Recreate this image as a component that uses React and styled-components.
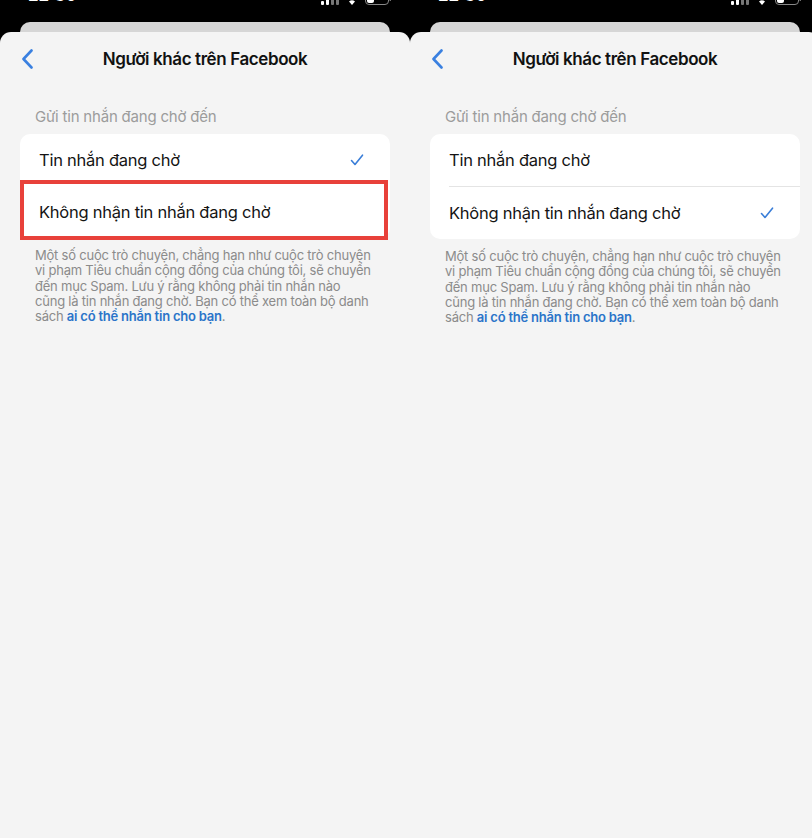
import styled, { createGlobalStyle } from "styled-components";

const GlobalStyle = createGlobalStyle`
  html, body {
    margin: 0;
    padding: 0;
    background: #000;
  }
  body {
    font-family: Inter, "Noto Sans", sans-serif;
    -webkit-font-smoothing: antialiased;
  }
`;

const Root = styled.div`
  width: 812px;
  height: 838px;
  overflow: hidden;
  display: grid;
  grid-template-columns: 410px 410px;
  background: #000;
`;

const Phone = styled.div`
  display: flex;
  flex-direction: column;
  height: 838px;
  background: #000;
`;

// only the lower edge of the status bar is visible above the sheet
const StatusBar = styled.div`
  height: 22px;
  overflow: hidden;
`;

const StatusInner = styled.div`
  display: flex;
  justify-content: space-between;
  align-items: flex-end;
  margin-top: -13px;
  padding: 0 18px 0 28px;
  color: #fff;
  font-size: 17px;
  font-weight: 600;
  height: 18px;
`;

const StatusIcons = styled.div`
  display: flex;
  align-items: flex-end;
  gap: 6px;
`;

const BehindSheet = styled.div`
  height: 10px;
  margin: 0 20px;
  background: #d6d6d6;
  border-radius: 10px 10px 0 0;
`;

const Sheet = styled.div`
  flex: 1;
  background: #f4f4f4;
  border-radius: 11px 11px 0 0;
  display: flex;
  flex-direction: column;
`;

const NavBar = styled.div`
  height: 54px;
  display: grid;
  grid-template-columns: 60px 1fr 60px;
  align-items: center;
`;

const BackButton = styled.div`
  padding-left: 21px;
  display: flex;
  align-items: center;
`;

const Title = styled.div`
  text-align: center;
  font-size: 17px;
  font-weight: 600;
  color: #111;
  letter-spacing: -0.4px;
`;

const SectionLabel = styled.div`
  margin: 21px 0 0 35px;
  font-size: 15px;
  color: #9c9c9c;
  letter-spacing: -0.2px;
`;

const Card = styled.div`
  margin: 8px 20px 0;
  background: #fff;
  border-radius: 10px;
  position: relative;
`;

const Row = styled.div`
  height: 52px;
  display: flex;
  align-items: center;
  justify-content: space-between;
  padding-right: 26px;
  font-size: 16.5px;
  color: #141414;
  letter-spacing: -0.25px;
  border-top: ${(p) => (p.$divider ? "1px solid #e4e4e4" : "none")};
  margin-left: ${(p) => (p.$first ? "0" : "19px")};
  padding-left: ${(p) => (p.$first ? "19px" : "0")};
`;

const Highlight = styled.div`
  position: absolute;
  left: 0;
  right: 2px;
  top: 46px;
  height: 60px;
  border: 4px solid #e8413a;
  box-sizing: border-box;
  pointer-events: none;
`;

const Footnote = styled.p`
  margin: 10px 20px 0 35px;
  font-size: 13px;
  line-height: 15.3px;
  color: #8b8b8b;
  letter-spacing: -0.22px;
`;

const Link = styled.span`
  color: #2b74c9;
  font-weight: 600;
`;

const Check = () => (
  <svg width="14" height="12" viewBox="0 0 14 12">
    <path
      d="M1.5 6.5 L5 10.5 L12.5 1.2"
      fill="none"
      stroke="#3a7ed8"
      strokeWidth="1.6"
      strokeLinecap="round"
      strokeLinejoin="round"
    />
  </svg>
);

const Chevron = () => (
  <svg width="13" height="20" viewBox="0 0 13 20">
    <path
      d="M10.5 1.5 L2.5 10 L10.5 18.5"
      fill="none"
      stroke="#3a80e0"
      strokeWidth="2.6"
      strokeLinecap="round"
      strokeLinejoin="round"
    />
  </svg>
);

const Signal = () => (
  <svg width="18" height="12" viewBox="0 0 18 12">
    <rect x="0" y="8" width="3" height="4" rx="1" fill="#fff" />
    <rect x="5" y="5" width="3" height="7" rx="1" fill="#fff" />
    <rect x="10" y="2" width="3" height="10" rx="1" fill="#777" />
    <rect x="15" y="0" width="3" height="12" rx="1" fill="#777" />
  </svg>
);

const Wifi = () => (
  <svg width="14" height="12" viewBox="0 0 14 12">
    <path d="M7 12 L4 8.5 A4.5 4.5 0 0 1 10 8.5 Z" fill="#fff" />
  </svg>
);

const Battery = () => (
  <svg width="27" height="13" viewBox="0 0 27 13">
    <rect x="0.5" y="0.5" width="23" height="12" rx="3.5" fill="none" stroke="#888" />
    <rect x="2" y="2" width="7" height="9" rx="2" fill="#fff" />
    <rect x="24.5" y="4" width="1.5" height="5" rx="0.7" fill="#888" />
  </svg>
);

const Screen = ({ selected, marked }) => (
  <Phone>
    <StatusBar>
      <StatusInner>
        <span>22:30</span>
        <StatusIcons>
          <Signal />
          <Wifi />
          <Battery />
        </StatusIcons>
      </StatusInner>
    </StatusBar>
    <BehindSheet />
    <Sheet>
      <NavBar>
        <BackButton>
          <Chevron />
        </BackButton>
        <Title>Người khác trên Facebook</Title>
        <span />
      </NavBar>
      <SectionLabel>Gửi tin nhắn đang chờ đến</SectionLabel>
      <Card>
        <Row $first>
          Tin nhắn đang chờ
          {selected === 0 && <Check />}
        </Row>
        <Row $divider={!marked}>
          Không nhận tin nhắn đang chờ
          {selected === 1 && <Check />}
        </Row>
        {marked && <Highlight />}
      </Card>
      <Footnote>
        Một số cuộc trò chuyện, chẳng hạn như cuộc trò chuyện
        <br />
        vi phạm Tiêu chuẩn cộng đồng của chúng tôi, sẽ chuyển
        <br />
        đến mục Spam. Lưu ý rằng không phải tin nhắn nào
        <br />
        cũng là tin nhắn đang chờ. Bạn có thể xem toàn bộ danh
        <br />
        sách <Link>ai có thể nhắn tin cho bạn</Link>.
      </Footnote>
    </Sheet>
  </Phone>
);

export default function App() {
  return (
    <>
      <GlobalStyle />
      <Root>
        <Screen selected={0} marked />
        <Screen selected={1} />
      </Root>
    </>
  );
}
